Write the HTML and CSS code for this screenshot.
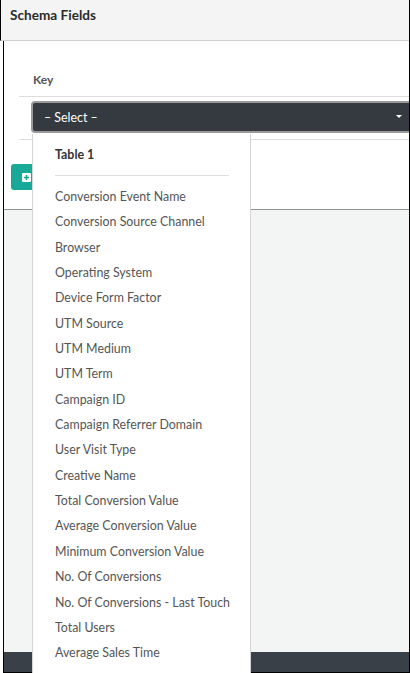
FILE: index.html
```html
<!DOCTYPE html>
<html>
<head>
<meta charset="utf-8">
<link rel="stylesheet" href="styles.css">
</head>
<body>
<div class="frame">
  <div class="header"><span class="title">Schema Fields</span></div>
  <div class="main">
    <div class="card">
      <div class="table">
        <div class="th">Key</div>
        <div class="tr">
          <div class="select">
            <span>– Select –</span>
            <span class="caret"></span>
          </div>
        </div>
      </div>
      <div class="actions">
        <button class="add-btn"><span class="plus-box"><svg width="7" height="7" viewBox="0 0 7 7"><path d="M3.5 1v5M1 3.5h5" stroke="#1aa898" stroke-width="1.6"/></svg></span></button>
      </div>
    </div>
    <div class="gray-area"></div>
    <div class="footer"></div>
  </div>
  <div class="dropdown">
    <div class="group">Table 1</div>
    <div class="sep"></div>
    <ul class="items">
      <li>Conversion Event Name</li>
      <li>Conversion Source Channel</li>
      <li>Browser</li>
      <li>Operating System</li>
      <li>Device Form Factor</li>
      <li>UTM Source</li>
      <li>UTM Medium</li>
      <li>UTM Term</li>
      <li>Campaign ID</li>
      <li>Campaign Referrer Domain</li>
      <li>User Visit Type</li>
      <li>Creative Name</li>
      <li>Total Conversion Value</li>
      <li>Average Conversion Value</li>
      <li>Minimum Conversion Value</li>
      <li>No. Of Conversions</li>
      <li>No. Of Conversions - Last Touch</li>
      <li>Total Users</li>
      <li>Average Sales Time</li>
    </ul>
  </div>
</div>
</body>
</html>
```
FILE: styles.css
```css
* { box-sizing: border-box; }
html, body { margin: 0; padding: 0; background: #fff; }
body { font-family: Lato, "Open Sans", sans-serif; font-size: 12.4px; color: #555; }

.frame {
  position: relative;
  width: 410px;
  height: 673px;
  border-right: 1px solid #000;
  overflow: hidden;
}

.header {
  height: 41px;
  background: #f4f4f4;
  border-left: 1px solid #000;
  border-bottom: 1px solid #cfcfcf;
  padding: 7px 0 0 9px;
}
.title { font-weight: bold; font-size: 13.6px; color: #2b2b2b; }

.main {
  display: flex;
  flex-direction: column;
  height: 632px;
  margin-left: 3px;
  border-left: 1px solid #000;
  border-bottom: 1px solid #000;
}

.card {
  height: 169px;
  background: #fff;
  border-bottom: 1px solid #8f9493;
  padding-top: 29px;
}

.table { margin-left: 15px; }
.th {
  height: 27px;
  padding-left: 14px;
  font-weight: bold;
  font-size: 12px;
  color: #555;
  border-bottom: 1px solid #dedede;
  line-height: 20px;
}
.tr {
  height: 43px;
  padding: 4px 0 0 12px;
  border-bottom: 1px solid #dedede;
}
.select {
  width: 420px;
  height: 32px;
  background: #343a40;
  border: 2px solid #9a9a9a;
  border-radius: 4px;
  color: #fff;
  display: flex;
  align-items: center;
  padding-left: 11px;
  position: relative;
}
.caret {
  position: absolute;
  left: 363px;
  top: 12px;
  width: 0; height: 0;
  border-left: 3px solid transparent;
  border-right: 3px solid transparent;
  border-top: 3px solid #fff;
}

.actions { padding: 24px 0 0 7px; }
.add-btn {
  width: 30px;
  height: 26px;
  background: #18a999;
  border: none;
  border-radius: 3px;
  padding: 0;
  display: flex;
  align-items: center;
  justify-content: center;
}
.plus-box {
  width: 9px; height: 9px;
  background: #fff;
  border-radius: 1px;
  display: flex;
  align-items: center;
  justify-content: center;
}

.gray-area { flex: 1; background: #f3f5f4; }
.footer { height: 20px; background: #3a4047; }

.dropdown {
  position: absolute;
  left: 32px;
  top: 134px;
  width: 219px;
  height: 560px;
  background: #fff;
  border: 1px solid #d4d4d4;
  border-top: none;
  padding: 12px 0 0 22px;
}
.group { font-weight: bold; color: #333; height: 18px; line-height: 18px; }
.sep { width: 174px; height: 1px; background: #e0e0e0; margin: 11px 0 12px 0; }
.items { list-style: none; margin: 0; padding: 0; }
.items li { height: 25.35px; line-height: 18px; color: #555; white-space: nowrap; }
```
